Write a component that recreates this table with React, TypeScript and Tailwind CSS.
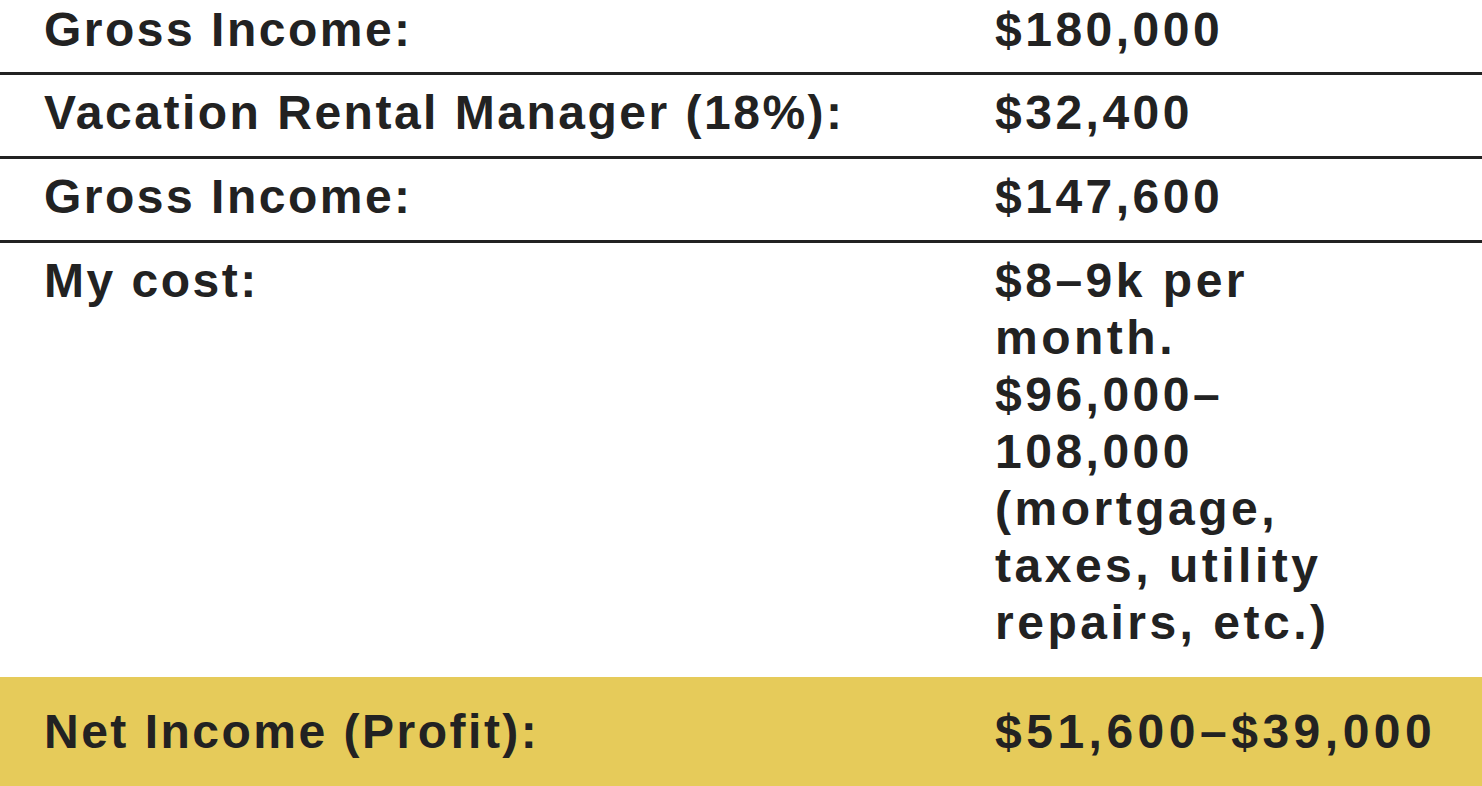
import React from 'react'

// 수익 요약 표 - 라벨 / 금액 두 열
interface Row {
  label: string
  value: React.ReactNode
  className: string
}

const rows: Row[] = [
  { label: 'Gross Income:', value: '$180,000', className: 'pt-[1px] pb-[14px] border-b-[3px]' },
  { label: 'Vacation Rental Manager (18%):', value: '$32,400', className: 'pt-[9px] pb-[15px] border-b-[3px]' },
  { label: 'Gross Income:', value: '$147,600', className: 'pt-[9px] pb-[15px] border-b-[3px]' },
  {
    label: 'My cost:',
    value: (
      <>
        $8–9k per
        <br />
        month.
        <br />
        $96,000–
        <br />
        108,000
        <br />
        (mortgage,
        <br />
        taxes, utility
        <br />
        repairs, etc.)
      </>
    ),
    className: 'pt-[9px] pb-[26px]',
  },
]

export default function App() {
  return (
    <div
      className="w-[1482px] h-[786px] overflow-hidden bg-white text-[#222222] font-bold text-[48px] leading-[57px]"
      style={{ fontFamily: '"Liberation Sans", Arial, sans-serif' }}
    >
      {rows.map((row, i) => (
        <div key={i} className={`grid grid-cols-[995px_1fr] border-[#222222] ${row.className}`}>
          <div className="pl-[44px] tracking-[2.5px]">{row.label}</div>
          <div className="tracking-[3.5px]">{row.value}</div>
        </div>
      ))}

      {/* 순이익 강조 행 */}
      <div className="grid grid-cols-[995px_1fr] bg-[#e6cb5a] pt-[26px] pb-[30px]">
        <div className="pl-[44px] tracking-[2.5px]">Net Income (Profit):</div>
        <div className="tracking-[4.5px] whitespace-nowrap">$51,600–$39,000</div>
      </div>
    </div>
  )
}
